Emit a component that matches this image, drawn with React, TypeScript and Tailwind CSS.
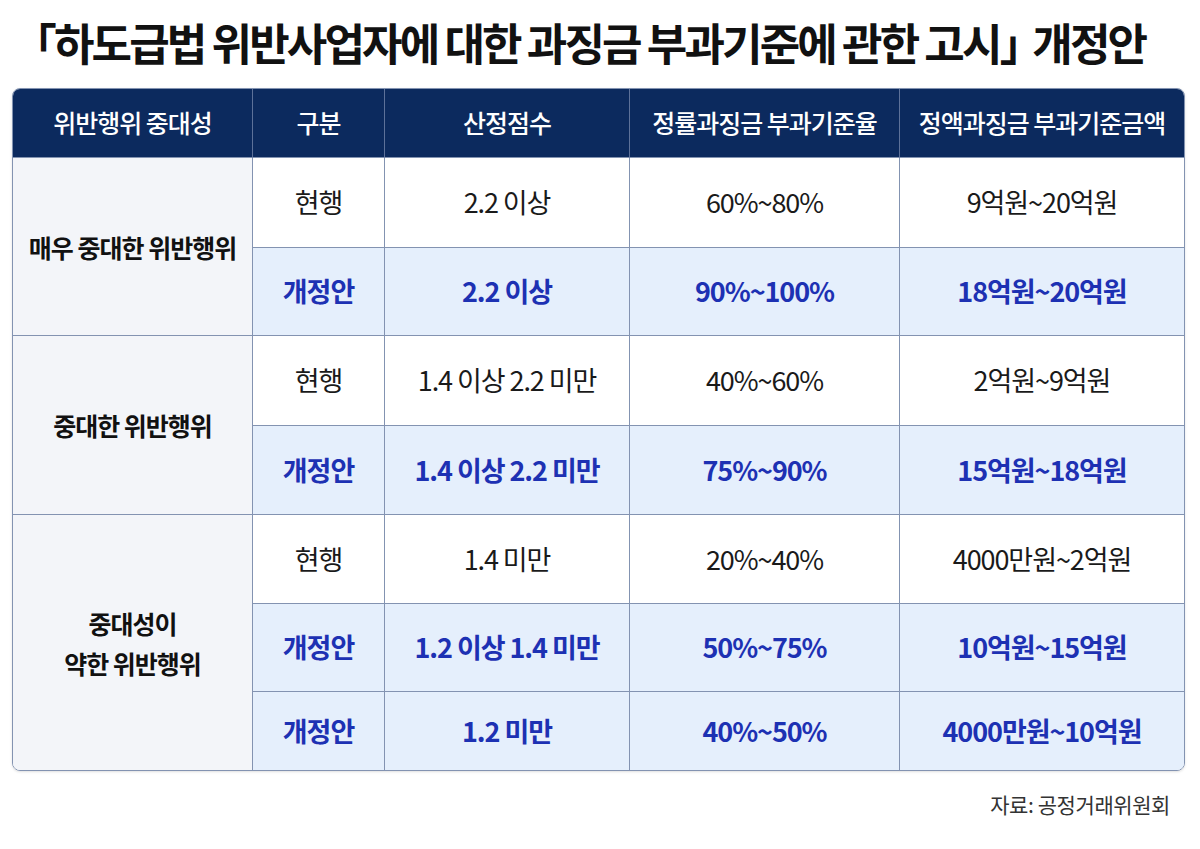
import React from 'react';

type Row = {
  kind: 'current' | 'revised';
  score: string;
  rate: string;
  amount: string;
};

type Group = {
  label: string[];
  rows: Row[];
};

const groups: Group[] = [
  {
    label: ['매우 중대한 위반행위'],
    rows: [
      { kind: 'current', score: '2.2 이상', rate: '60%~80%', amount: '9억원~20억원' },
      { kind: 'revised', score: '2.2 이상', rate: '90%~100%', amount: '18억원~20억원' },
    ],
  },
  {
    label: ['중대한 위반행위'],
    rows: [
      { kind: 'current', score: '1.4 이상 2.2 미만', rate: '40%~60%', amount: '2억원~9억원' },
      { kind: 'revised', score: '1.4 이상 2.2 미만', rate: '75%~90%', amount: '15억원~18억원' },
    ],
  },
  {
    label: ['중대성이', '약한 위반행위'],
    rows: [
      { kind: 'current', score: '1.4 미만', rate: '20%~40%', amount: '4000만원~2억원' },
      { kind: 'revised', score: '1.2 이상 1.4 미만', rate: '50%~75%', amount: '10억원~15억원' },
      { kind: 'revised', score: '1.2 미만', rate: '40%~50%', amount: '4000만원~10억원' },
    ],
  },
];

const headers = ['위반행위 중대성', '구분', '산정점수', '정률과징금 부과기준율', '정액과징금 부과기준금액'];

const font = { fontFamily: '"Noto Sans CJK KR", "Noto Sans", sans-serif' };

const App: React.FC = () => {
  let rowIndex = 0;
  const totalRows = groups.reduce((n, g) => n + g.rows.length, 0);

  return (
    <div className="w-[1200px] h-[849px] bg-white text-[#111]" style={font}>
      {/* Title */}
      <div className="h-[88px] flex items-center justify-center pr-[42px] pb-[4px]">
        <h1 className="text-[44px] font-bold tracking-[-0.065em] text-[#111] leading-none">
          「하도급법 위반사업자에 대한 과징금 부과기준에 관한 고시<span className="tracking-[-0.42em]">」</span> 개정안
        </h1>
      </div>

      {/* Table */}
      <div className="ml-[12px] w-[1173px] border border-[#8393b1] rounded-lg overflow-hidden shadow-sm">
        <div className="grid grid-cols-[240px_132px_245px_270px_284px] grid-rows-[69px_90px_88px_90px_89px_89px_88px_78px]">
          {headers.map((h, i) => (
            <div
              key={h}
              className={`bg-[#0c2a5e] text-white text-[25px] font-medium tracking-[-0.04em] flex items-center justify-center border-b border-[#8393b1] ${
                i < headers.length - 1 ? 'border-r border-r-[#5d7199]' : ''
              }`}
            >
              {h}
            </div>
          ))}

          {groups.map((g, gi) => {
            const start = rowIndex;
            rowIndex += g.rows.length;
            const isLastGroup = gi === groups.length - 1;
            return (
              <React.Fragment key={gi}>
                <div
                  className={`bg-[#f3f5f9] flex flex-col items-center justify-center border-r border-[#8393b1] text-[25px] font-bold tracking-[-0.04em] leading-[40px] ${
                    isLastGroup ? '' : 'border-b'
                  } ${g.rows.length === 3 ? 'row-span-3' : 'row-span-2'}`}
                  style={{ gridColumn: 1, gridRowStart: start + 2 }}
                >
                  {g.label.map((l) => (
                    <span key={l}>{l}</span>
                  ))}
                </div>
                {g.rows.map((r, ri) => {
                  const revised = r.kind === 'revised';
                  const last = start + ri === totalRows - 1;
                  const cell = `flex items-center justify-center text-[27px] tracking-[-0.04em] border-[#8393b1] ${
                    last ? '' : 'border-b'
                  } ${revised ? 'bg-[#e5effc] text-[#1d31b3] font-bold' : 'bg-white text-[#1a1a1a]'}`;
                  return (
                    <React.Fragment key={ri}>
                      <div className={`${cell} border-r`}>{revised ? '개정안' : '현행'}</div>
                      <div className={`${cell} border-r`}>{r.score}</div>
                      <div className={`${cell} border-r`}>{r.rate}</div>
                      <div className={cell}>{r.amount}</div>
                    </React.Fragment>
                  );
                })}
              </React.Fragment>
            );
          })}
        </div>
      </div>

      {/* Source */}
      <div className="w-[1170px] flex justify-end pt-[18px]">
        <span className="text-[21px] text-[#333] tracking-[-0.02em]">자료: 공정거래위원회</span>
      </div>
    </div>
  );
};

export default App;
